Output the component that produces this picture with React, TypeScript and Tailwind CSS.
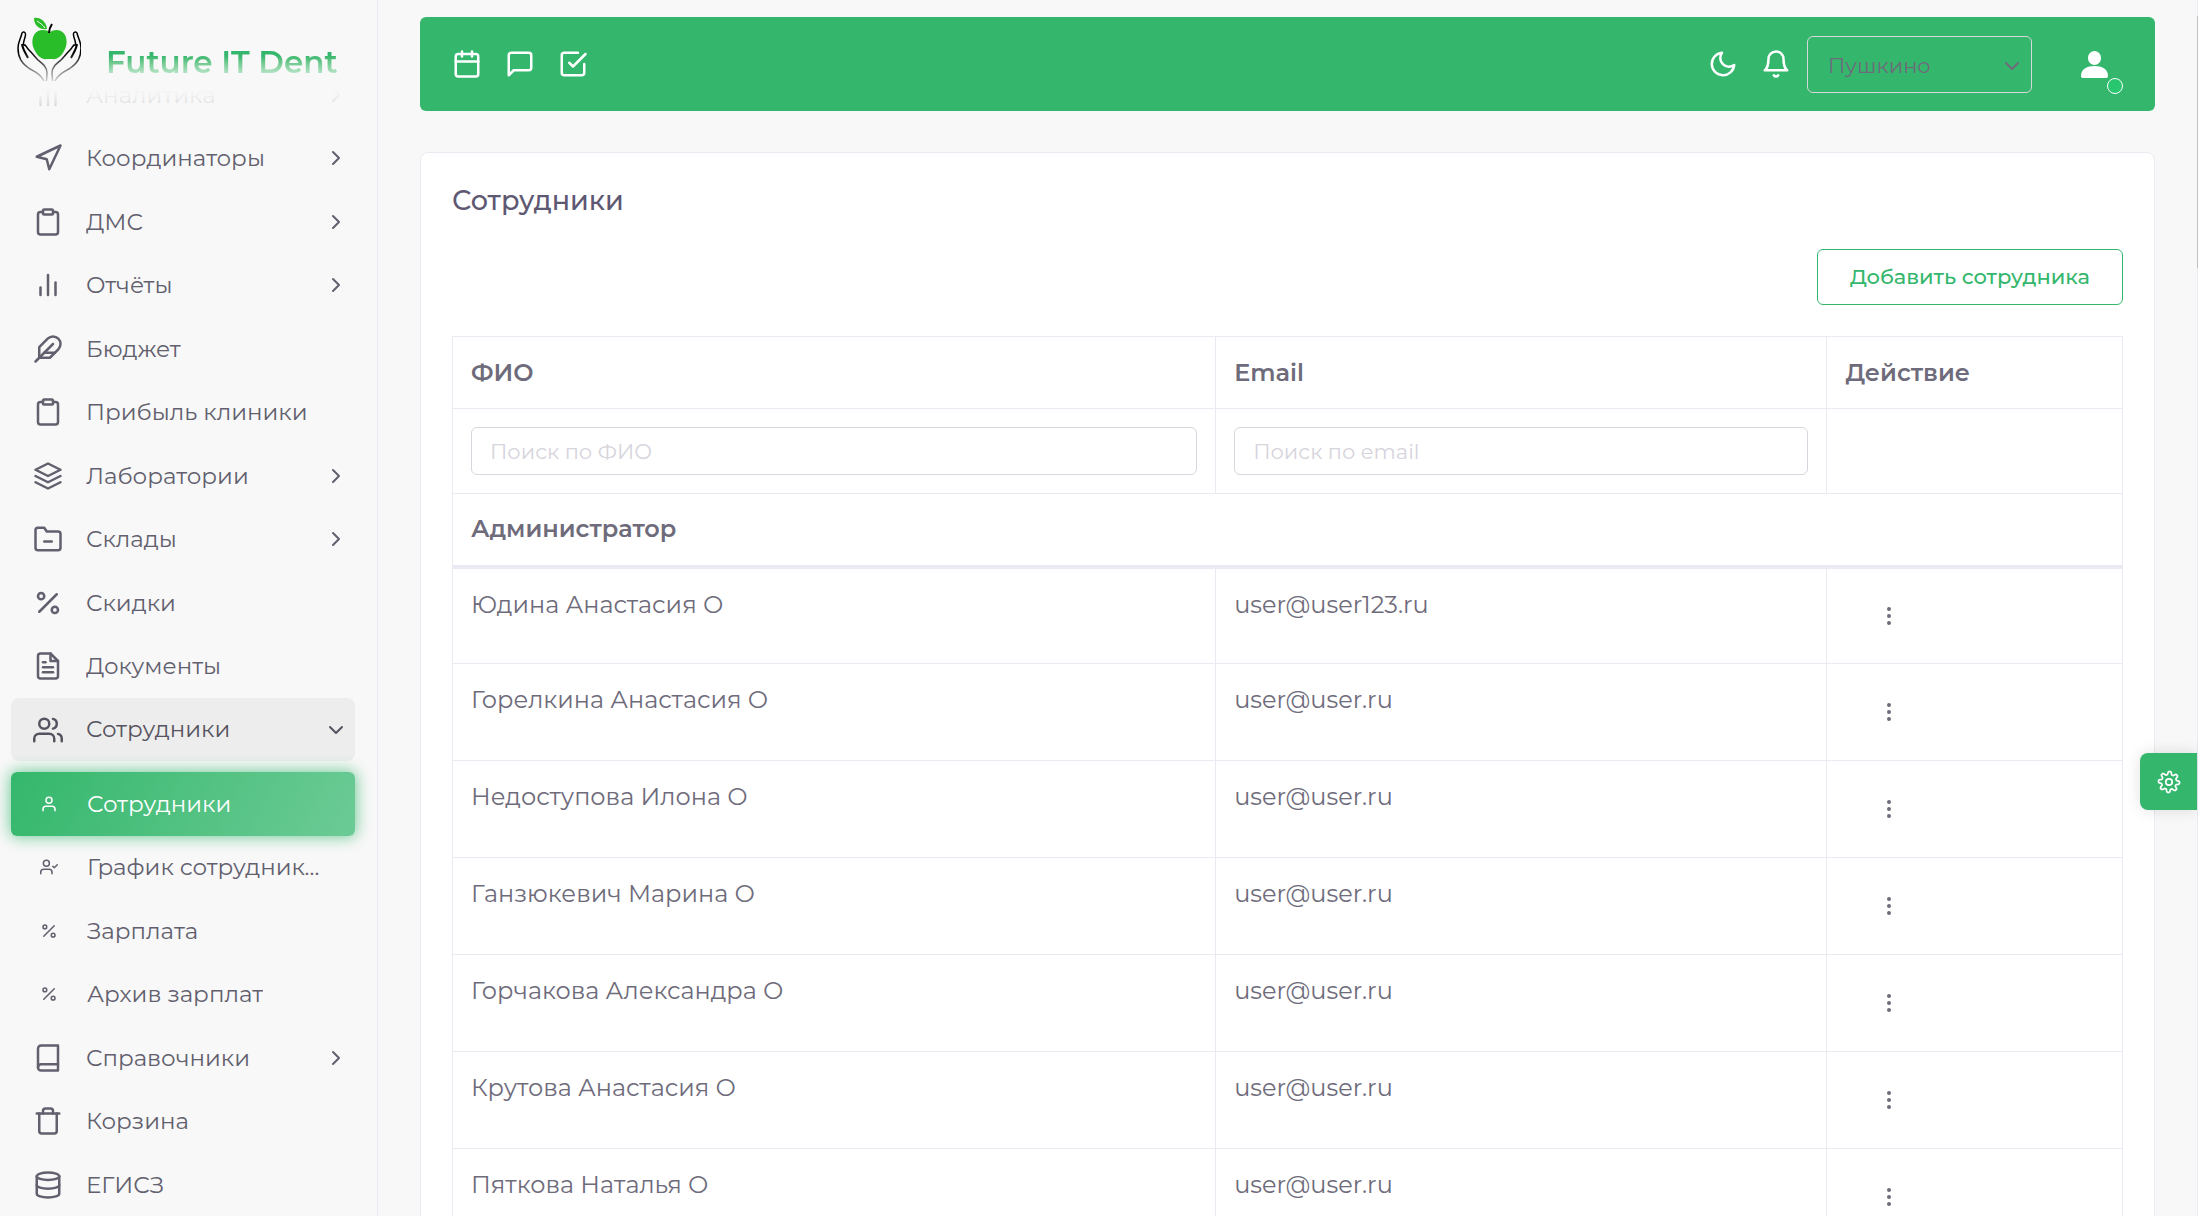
import type { ComponentType } from "react";
import {
    FiBarChart2,
    FiBell,
    FiBook,
    FiCalendar,
    FiCheckSquare,
    FiChevronDown,
    FiChevronRight,
    FiClipboard,
    FiDatabase,
    FiFeather,
    FiFileText,
    FiFolderMinus,
    FiLayers,
    FiMessageSquare,
    FiMoon,
    FiMoreVertical,
    FiNavigation,
    FiPercent,
    FiTrash,
    FiUser,
    FiUserCheck,
    FiUsers,
} from "react-icons/fi";

type Icon = ComponentType<{ className?: string }>;
type NavItem = { title: string; icon: Icon; group?: boolean };

const mainItems: NavItem[] = [
    { title: "Аналитика", icon: FiBarChart2, group: true },
    { title: "Координаторы", icon: FiNavigation, group: true },
    { title: "ДМС", icon: FiClipboard, group: true },
    { title: "Отчёты", icon: FiBarChart2, group: true },
    { title: "Бюджет", icon: FiFeather },
    { title: "Прибыль клиники", icon: FiClipboard },
    { title: "Лаборатории", icon: FiLayers, group: true },
    { title: "Склады", icon: FiFolderMinus, group: true },
    { title: "Скидки", icon: FiPercent },
    { title: "Документы", icon: FiFileText },
];

const staffItems: NavItem[] = [
    { title: "Сотрудники", icon: FiUser },
    { title: "График сотрудников", icon: FiUserCheck },
    { title: "Зарплата", icon: FiPercent },
    { title: "Архив зарплат", icon: FiPercent },
];

const bottomItems: NavItem[] = [
    { title: "Справочники", icon: FiBook, group: true },
    { title: "Корзина", icon: FiTrash },
    { title: "ЕГИСЗ", icon: FiDatabase },
];

const employees = [
    { name: "Юдина Анастасия О", email: "user@user123.ru" },
    { name: "Горелкина Анастасия О", email: "user@user.ru" },
    { name: "Недоступова Илона О", email: "user@user.ru" },
    { name: "Ганзюкевич Марина О", email: "user@user.ru" },
    { name: "Горчакова Александра О", email: "user@user.ru" },
    { name: "Крутова Анастасия О", email: "user@user.ru" },
    { name: "Пяткова Наталья О", email: "user@user.ru" },
];

const handPath =
    "M27 65C24 59 20 57 13 53 4 47 1 41 1 32 1 26 4 22 5 17 6 15 9 16 8.500 19 8 23 6 25 6.500 29 9 28 9 31 12 34 16 38 18 41 21 44 26 48 30 51 30 57L29.500 65";

function Logo() {
    return (
        <svg viewBox="0 0 64 66" className="h-[66px] w-16 shrink-0" aria-hidden="true">
            <defs>
                <linearGradient id="hands" gradientUnits="userSpaceOnUse" x1="0" y1="36" x2="0" y2="67">
                    <stop offset="0" stopColor="#000" />
                    <stop offset="1" stopColor="#000" stopOpacity="0.1" />
                </linearGradient>
            </defs>
            <path
                fill="#29bd29"
                d="M33 16c-3-2-8-3-12-1-6 3-7 12-4 18 3 7 8 11 13 10h5c5 1 10-3 13-10 3-6 2-15-4-18-4-2-8-1-11 1Z"
            />
            <path fill="#29bd29" d="M17 2c6-1 12 3 13 11-7 1-13-3-13-11Z" />
            <path d="M20 5c3 2 6 4 8 7" stroke="#f8f8f8" strokeWidth="1" fill="none" />
            <path d="M32 17c0-4 1-6 3-9" stroke="#000" strokeWidth="2" fill="none" />
            <g fill="none" stroke="url(#hands)" strokeWidth="1.5" strokeLinejoin="round">
                <path d={handPath} />
                <path d="M5 28c1 6 4 10 6 14" strokeWidth="2" />
                <g transform="matrix(-1 0 0 1 65 0)">
                    <path d={handPath} />
                    <path d="M5 28c1 6 4 10 6 14" strokeWidth="2" />
                </g>
            </g>
        </svg>
    );
}

// closed wave of eight teeth around the hub
const gearPoints = Array.from({ length: 96 }, (_, i) => {
    const angle = (i / 96) * Math.PI * 2;
    const radius = 9 + 1.6 * Math.tanh(2 * Math.cos(8 * angle - 0.6));
    return `${(12 + radius * Math.cos(angle)).toFixed(2)},${(12 + radius * Math.sin(angle)).toFixed(2)}`;
}).join(" ");

function Gear() {
    return (
        <svg viewBox="0 0 24 24" className="size-6" fill="none" stroke="currentColor" strokeWidth="1.700" aria-hidden="true">
            <circle cx="12" cy="12" r="3.200" />
            <polygon points={gearPoints} strokeLinejoin="round" />
        </svg>
    );
}

function NavLink({ item }: { item: NavItem }) {
    const { title, icon: ItemIcon, group } = item;
    return (
        <li className="flex">
            <a href="#" className="flex min-w-0 flex-1 items-center rounded-lg pr-[7px] pl-[22px]">
                <ItemIcon className="size-[30px] shrink-0" />
                <span className="ml-[23px] flex-1 truncate">{title}</span>
                {group && <FiChevronRight className="size-6 shrink-0" />}
            </a>
        </li>
    );
}

function Sidebar() {
    return (
        <aside className="relative h-screen w-[378px] shrink-0 overflow-hidden border-r border-[#ebe9f1] bg-[#f8f8f8]">
            <nav className="pt-[63px] pr-[22px] pl-[11px] text-[23px] text-[#625f6e]">
                <ul className="grid h-[635px] auto-rows-fr grid-cols-1">
                    {mainItems.map((item) => (
                        <NavLink key={item.title} item={item} />
                    ))}
                </ul>
                <button
                    type="button"
                    aria-expanded="true"
                    className="flex h-[63px] w-full items-center rounded-lg bg-[#ededed] pr-[7px] pl-[22px] text-left text-[#565360]"
                >
                    <FiUsers className="size-[30px] shrink-0" />
                    <span className="ml-[23px] flex-1">Сотрудники</span>
                    <FiChevronDown className="size-6 shrink-0" />
                </button>
                <ul className="mt-[11px] grid h-[254px] auto-rows-fr grid-cols-1">
                    {staffItems.map(({ title, icon: ItemIcon }, i) => (
                        <li key={title} className="flex">
                            <a
                                href="#"
                                className={
                                    i === 0
                                        ? "flex min-w-0 flex-1 items-center rounded-md bg-linear-[118deg] from-[#34b76c] to-[#6ccb95] px-[29px] text-white shadow-[0_0_15px_1px_rgba(52,183,108,0.7)]"
                                        : "flex min-w-0 flex-1 items-center px-[29px]"
                                }
                            >
                                <ItemIcon className="size-[18px] shrink-0" />
                                <span className="ml-[29px] truncate">{title}</span>
                            </a>
                        </li>
                    ))}
                </ul>
                <ul className="grid h-[191px] auto-rows-fr grid-cols-1">
                    {bottomItems.map((item) => (
                        <NavLink key={item.title} item={item} />
                    ))}
                </ul>
            </nav>

            {/* brand stays above the scrolled menu, which fades out under it */}
            <div className="absolute inset-x-0 top-0 h-[140px] bg-linear-to-b from-[#f8f8f8] from-60% to-[#f8f8f8]/0">
                <div className="h-[110px] bg-linear-to-b from-[#f8f8f8] from-75% to-[#f8f8f8]/40">
                    <a href="#" className="flex items-start pt-4 pl-[17px]">
                        <Logo />
                        <span className="mt-[26px] ml-[25px] bg-linear-to-b from-[#34b76c] from-35% to-[#c5ead4] to-85% bg-clip-text text-[31px] leading-10 font-semibold text-transparent">
                            Future IT Dent
                        </span>
                    </a>
                </div>
            </div>
        </aside>
    );
}

function Topbar() {
    return (
        <header className="flex h-[94px] items-center rounded-md bg-[#34b76c] pr-[38px] pl-8 text-white">
            <div className="flex gap-[23px]">
                <button type="button" aria-label="Календарь">
                    <FiCalendar className="size-[30px]" />
                </button>
                <button type="button" aria-label="Чат">
                    <FiMessageSquare className="size-[30px]" />
                </button>
                <button type="button" aria-label="Задачи">
                    <FiCheckSquare className="size-[30px]" />
                </button>
            </div>
            <div className="ml-auto flex items-center">
                <button type="button" aria-label="Тёмная тема">
                    <FiMoon className="size-[30px]" />
                </button>
                <button type="button" aria-label="Уведомления" className="ml-[23px]">
                    <FiBell className="size-[30px]" />
                </button>
                <div className="relative ml-4">
                    <select
                        aria-label="Клиника"
                        className="h-[57px] w-[225px] appearance-none rounded-md border border-[#d8d6de] bg-transparent px-5 pt-[3px] text-[21px] text-[#6e6b7b]"
                    >
                        <option>Пушкино</option>
                    </select>
                    <FiChevronDown className="pointer-events-none absolute top-[18px] right-2 size-6 text-[#6e6b7b]" />
                </div>
                <button type="button" aria-label="Профиль" className="relative ml-10 size-[45px]">
                    <svg viewBox="0 0 45 45" className="size-[45px]" fill="currentColor" aria-hidden="true">
                        <rect x="16" y="9" width="13" height="14" rx="6.500" />
                        <path d="M9 34c0-7 6-10 13.500-10S36 27 36 34c0 1.500-1 2-2 2H11c-1 0-2-.500-2-2Z" />
                    </svg>
                    <span className="absolute -right-[6px] -bottom-[7px] size-4 rounded-full border border-white bg-[#28c76f]" />
                </button>
            </div>
        </header>
    );
}

const cell = "border border-[#ebe9f1] px-[18px] text-left";
const searchInput =
    "block h-12 w-full rounded-md border border-[#d8d6de] bg-white px-[18px] text-[21px] text-[#6e6b7b] placeholder:text-[#d6d4dc]";

function EmployeesTable() {
    return (
        <table className="mt-[31px] w-full table-fixed border-collapse text-2xl leading-9">
            <colgroup>
                <col className="w-[45.7%]" />
                <col className="w-[36.6%]" />
                <col className="w-[17.7%]" />
            </colgroup>
            <thead>
                <tr className="h-[72px]">
                    <th className={`${cell} font-semibold`}>ФИО</th>
                    <th className={`${cell} font-semibold`}>Email</th>
                    <th className={`${cell} font-semibold`}>Действие</th>
                </tr>
                <tr className="h-[85px]">
                    <td className={cell}>
                        <input type="text" aria-label="Поиск по ФИО" placeholder="Поиск по ФИО" className={searchInput} />
                    </td>
                    <td className={cell}>
                        <input type="text" aria-label="Поиск по email" placeholder="Поиск по email" className={searchInput} />
                    </td>
                    <td className={cell} />
                </tr>
                <tr className="h-[73px]">
                    <th colSpan={3} className="border border-b-4 border-[#ebe9f1] px-[18px] text-left font-semibold">
                        Администратор
                    </th>
                </tr>
            </thead>
            <tbody>
                {employees.map((e) => (
                    <tr key={e.name} className="h-[97px]">
                        <td className={`${cell} pt-[18px] align-top`}>{e.name}</td>
                        <td className={`${cell} pt-[18px] align-top`}>{e.email}</td>
                        <td className={cell}>
                            <button type="button" aria-label="Действия" className="block px-8">
                                <FiMoreVertical className="size-6" />
                            </button>
                        </td>
                    </tr>
                ))}
            </tbody>
        </table>
    );
}

export default function App() {
    return (
        <div className="flex h-screen overflow-hidden border-r border-[#ebe9f1] bg-[#f8f8f8] font-['Montserrat','Inter',sans-serif] text-[#6e6b7b]">
            <Sidebar />
            <main className="min-w-0 flex-1 px-[42px] pt-[17px]">
                <Topbar />
                <section className="mt-[41px] rounded-lg border border-[#ebe9f1] bg-white px-[31px] pt-7">
                    <h1 className="text-[27px] leading-10 font-medium text-[#5e5873]">Сотрудники</h1>
                    <div className="mt-7 flex justify-end">
                        <button
                            type="button"
                            className="h-14 rounded-md border border-[#34b76c] px-8 text-[21px] font-medium text-[#34b76c]"
                        >
                            Добавить сотрудника
                        </button>
                    </div>
                    <EmployeesTable />
                </section>
            </main>
            <button
                type="button"
                aria-label="Настройки"
                className="fixed top-[753px] right-px flex size-[57px] items-center justify-center rounded-l-lg bg-[#34b76c] text-white shadow-[0_0_15px_rgba(0,0,0,0.12)]"
            >
                <Gear />
            </button>
            {/* scrollbar thumb */}
            <div className="fixed top-4 right-0 h-[252px] w-px bg-[#c1c1c1]" />
        </div>
    );
}
